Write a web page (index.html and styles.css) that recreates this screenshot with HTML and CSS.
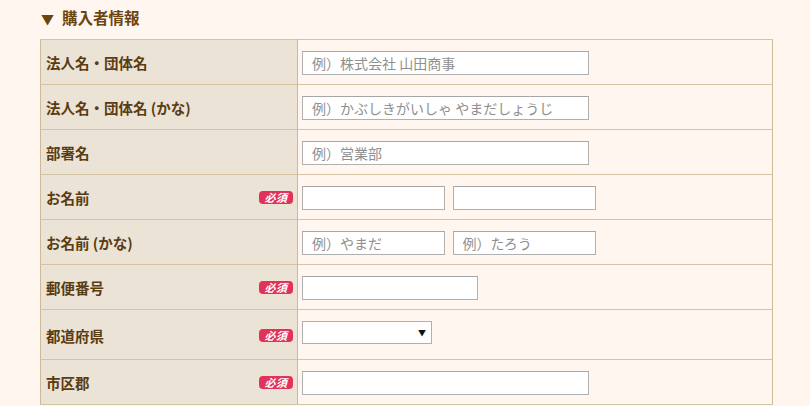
FILE: index.html
```html
<!DOCTYPE html>
<html lang="ja">
<head>
    <meta charset="UTF-8">
    <title>購入者情報</title>
    <link rel="stylesheet" href="styles.css">
</head>
<body>
<div class="container">
    <h3 class="section-title"><span class="arrow">▼</span>購入者情報</h3>

    <table class="form-table">
        <tr>
            <th><div class="th-inner"><span class="label">法人名・団体名</span></div></th>
            <td><input type="text" class="w-long" placeholder="例）株式会社 山田商事"></td>
        </tr>
        <tr>
            <th><div class="th-inner"><span class="label">法人名・団体名 (かな)</span></div></th>
            <td><input type="text" class="w-long" placeholder="例）かぶしきがいしゃ やまだしょうじ"></td>
        </tr>
        <tr>
            <th><div class="th-inner"><span class="label">部署名</span></div></th>
            <td><input type="text" class="w-long" placeholder="例）営業部"></td>
        </tr>
        <tr>
            <th><div class="th-inner"><span class="label">お名前</span><span class="required">必須</span></div></th>
            <td class="pair">
                <input type="text" class="w-half">
                <input type="text" class="w-half">
            </td>
        </tr>
        <tr>
            <th><div class="th-inner"><span class="label">お名前 (かな)</span></div></th>
            <td class="pair">
                <input type="text" class="w-half" placeholder="例）やまだ">
                <input type="text" class="w-half" placeholder="例）たろう">
            </td>
        </tr>
        <tr>
            <th><div class="th-inner"><span class="label">郵便番号</span><span class="required">必須</span></div></th>
            <td><input type="text" class="w-zip"></td>
        </tr>
        <tr class="select-row">
            <th><div class="th-inner"><span class="label">都道府県</span><span class="required">必須</span></div></th>
            <td>
                <span class="select-wrap">
                    <select class="w-pref">
                        <option></option>
                    </select>
                </span>
            </td>
        </tr>
        <tr>
            <th><div class="th-inner"><span class="label">市区郡</span><span class="required">必須</span></div></th>
            <td><input type="text" class="w-long"></td>
        </tr>
    </table>
</div>
</body>
</html>
```

FILE: styles.css
```css
html, body {
    margin: 0;
    padding: 0;
    background-color: #fff6f0;
}
body {
    font-family: "Noto Sans CJK JP", "Liberation Sans", sans-serif;
    color: #5a3c12;
}
.container {
    padding: 0 37px 0 40px;
}
.section-title {
    margin: 0;
    height: 39px;
    line-height: 35px;
    font-size: 15.5px;
    font-weight: bold;
    color: #6a4510;
}
.section-title .arrow {
    display: inline-block;
    width: 21px;
    padding-left: 1px;
    font-size: 13px;
}
.form-table {
    width: 733px;
    border-collapse: collapse;
    border: 1px solid #cdb898;
}
.form-table th,
.form-table td {
    border-top: 1px solid #d6c3a3;
    border-bottom: 1px solid #d6c3a3;
    height: 45px;
    padding: 0;
    box-sizing: border-box;
}
.form-table th {
    width: 257px;
    background-color: #ebe3d6;
    border-right: 1px solid #cdb898;
    text-align: left;
    padding: 0 4px 0 5px;
    font-weight: bold;
    font-size: 14.5px;
    color: #5a3c12;
}
.th-inner {
    display: flex;
    justify-content: space-between;
    align-items: center;
}
.required {
    width: 34px;
    height: 13px;
    line-height: 13px;
    border-radius: 4px;
    background-color: #e3325a;
    color: #fff;
    font-size: 11px;
    font-style: italic;
    font-weight: bold;
    text-align: center;
    letter-spacing: 0.5px;
}
.form-table td {
    background-color: #fff6f0;
    padding: 0 0 0 4px;
}
.form-table td.pair input + input {
    margin-left: 4px;
}
input {
    box-sizing: border-box;
    height: 24px;
    padding: 0 9px;
    border: 1px solid #b0b0b0;
    border-top-color: #a6a6a6;
    background-color: #fff;
    font-family: "Noto Sans CJK JP", sans-serif;
    font-size: 14px;
    vertical-align: middle;
}
input::placeholder {
    color: #8f8f8f;
}
.w-long { width: 287px; }
.w-half { width: 143px; }
.w-zip { width: 176px; }

.select-row th,
.select-row td {
    height: 50px;
}
.select-row th {
    padding-top: 1px;
}
.select-wrap {
    position: relative;
    display: inline-block;
    vertical-align: middle;
    margin-bottom: 5px;
}
.select-wrap::after {
    content: "▼";
    position: absolute;
    right: 6px;
    top: 6px;
    font-size: 8px;
    color: #111;
    pointer-events: none;
}
.w-pref {
    display: block;
    box-sizing: border-box;
    width: 130px;
    height: 23px;
    border: 1px solid #b0b0b0;
    background-color: #fff;
    appearance: none;
    -webkit-appearance: none;
    border-radius: 0;
}
```
